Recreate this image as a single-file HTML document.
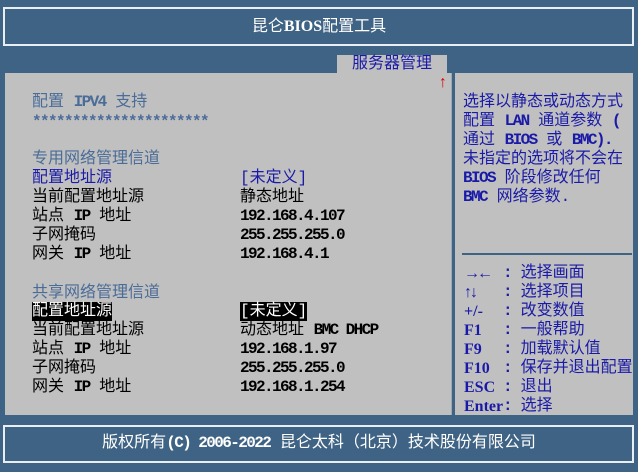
<!DOCTYPE html>
<html><head><meta charset="utf-8"><style>
*{margin:0;padding:0;box-sizing:border-box}
body{width:638px;height:472px;background:#3f6384;position:relative;overflow:hidden;font-family:"Liberation Mono","WenQuanYi Zen Hei","Noto Sans CJK SC",monospace;font-size:16px;}
.a{position:absolute;white-space:pre;line-height:19px;height:19px}
.m{font-size:16px;letter-spacing:-1.6px;font-weight:bold}
.w{color:#fff}
.k{color:#000}
.b{color:#1a1aa8}
.h{color:#4a6c98}
.kb{font-family:"Liberation Serif",serif;font-weight:bold;font-size:16px;color:#1a1aa8}
</style></head><body>
<div style="position:absolute;left:3px;top:7px;width:631px;height:39px;border:2px solid #e8eef4"></div>
<div class="a w" style="left:0;width:638px;text-align:center;top:17px">昆仑<span style="font-family:'Liberation Serif',serif;font-weight:bold">BIOS</span>配置工具</div>
<div style="position:absolute;left:337px;top:55px;width:110px;height:20px;background:#c0c0c0"></div>
<div class="a b" style="left:352px;top:55px">服务器管理</div>
<div style="position:absolute;left:3px;top:73px;width:632px;height:342px;background:#c0c0c0;border-left:2px solid #3f6384;border-right:2px solid #3f6384"></div>
<div style="position:absolute;left:451px;top:73px;width:4px;height:342px;background:#3f6384;border-left:1px solid #9aa8b8"></div>
<div style="position:absolute;left:462px;top:253px;width:170px;height:2px;background:#3f6384"></div>
<div class="a" style="left:438px;top:74px;color:#e00000;font-weight:bold">↑</div>

<div class="a h" style="left:32px;top:93px">配置 <span class="m">IPV4</span> 支持</div>
<div class="a h" style="left:32px;top:113px"><span class="m">**********************</span></div>
<div class="a h" style="left:32px;top:150px">专用网络管理信道</div>
<div class="a b" style="left:32px;top:169px">配置地址源</div>
<div class="a b" style="left:240px;top:169px">[未定义]</div>
<div class="a k" style="left:32px;top:188px">当前配置地址源</div>
<div class="a k" style="left:240px;top:188px">静态地址</div>
<div class="a k" style="left:32px;top:207px">站点 <span class="m">IP</span> 地址</div>
<div class="a k" style="left:240px;top:207px"><span class="m">192.168.4.107</span></div>
<div class="a k" style="left:32px;top:226px">子网掩码</div>
<div class="a k" style="left:240px;top:226px"><span class="m">255.255.255.0</span></div>
<div class="a k" style="left:32px;top:245px">网关 <span class="m">IP</span> 地址</div>
<div class="a k" style="left:240px;top:245px"><span class="m">192.168.4.1</span></div>

<div class="a h" style="left:32px;top:284px">共享网络管理信道</div>
<div class="a" style="left:32px;top:302px;background:#000;color:#fff">配置地址源</div>
<div class="a" style="left:240px;top:302px;background:#000;color:#fff">[未定义]</div>
<div class="a k" style="left:32px;top:321px">当前配置地址源</div>
<div class="a k" style="left:240px;top:321px">动态地址 <span class="m">BMC DHCP</span></div>
<div class="a k" style="left:32px;top:340px">站点 <span class="m">IP</span> 地址</div>
<div class="a k" style="left:240px;top:340px"><span class="m">192.168.1.97</span></div>
<div class="a k" style="left:32px;top:359px">子网掩码</div>
<div class="a k" style="left:240px;top:359px"><span class="m">255.255.255.0</span></div>
<div class="a k" style="left:32px;top:378px">网关 <span class="m">IP</span> 地址</div>
<div class="a k" style="left:240px;top:378px"><span class="m">192.168.1.254</span></div>

<div class="a b" style="left:463px;top:93px">选择以静态或动态方式</div>
<div class="a b" style="left:463px;top:112px">配置 <span class="m">LAN</span> 通道参数 <span class="m">(</span></div>
<div class="a b" style="left:463px;top:131px">通过 <span class="m">BIOS</span> 或 <span class="m">BMC).</span></div>
<div class="a b" style="left:463px;top:150px">未指定的选项将不会在</div>
<div class="a b" style="left:463px;top:169px"><span class="m">BIOS</span> 阶段修改任何</div>
<div class="a b" style="left:463px;top:188px"><span class="m">BMC</span> 网络参数.</div>

<div class="a kb" style="left:464px;top:264px;letter-spacing:-3px">→←</div><div class="a b" style="left:503px;top:264px"><span class="m">:</span> 选择画面</div>
<div class="a kb" style="left:464px;top:283px;letter-spacing:-2px">↑↓</div><div class="a b" style="left:503px;top:283px"><span class="m">:</span> 选择项目</div>
<div class="a kb" style="left:464px;top:302px">+/-</div><div class="a b" style="left:503px;top:302px"><span class="m">:</span> 改变数值</div>
<div class="a kb" style="left:464px;top:321px">F1</div><div class="a b" style="left:503px;top:321px"><span class="m">:</span> 一般帮助</div>
<div class="a kb" style="left:464px;top:340px">F9</div><div class="a b" style="left:503px;top:340px"><span class="m">:</span> 加载默认值</div>
<div class="a kb" style="left:464px;top:359px">F10</div><div class="a b" style="left:503px;top:359px"><span class="m">:</span> 保存并退出配置</div>
<div class="a kb" style="left:464px;top:378px">ESC</div><div class="a b" style="left:503px;top:378px"><span class="m">:</span> 退出</div>
<div class="a kb" style="left:464px;top:397px">Enter</div><div class="a b" style="left:503px;top:397px"><span class="m">:</span> 选择</div>

<div style="position:absolute;left:3px;top:425px;width:631px;height:38px;border:2px solid #e8eef4"></div>
<div class="a w" style="left:0;width:638px;text-align:center;top:434px">版权所有<span class="m">(C) 2006-2022</span> 昆仑太科（北京）技术股份有限公司</div>
</body></html>
